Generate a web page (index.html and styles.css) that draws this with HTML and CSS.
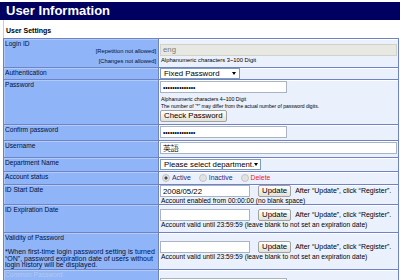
FILE: index.html
```html
<!DOCTYPE html>
<html lang="en">
<head>
  <meta charset="UTF-8" />
  <meta name="viewport" content="width=device-width, initial-scale=1.0" />
  <title>User Information</title>
  <link rel="stylesheet" href="styles.css">
</head>
<body>
  <div class="header">User Information</div>

  <div class="content">
    <div class="section-title">User Settings</div>

    <table class="settings">
      <tr class="row-login">
        <td class="label">
          <div>Login ID</div>
          <div class="rules">[Repetition not allowed]<br>[Changes not allowed]</div>
        </td>
        <td class="field">
          <input class="text-input wide readonly" type="text" value="eng" readonly />
          <div class="hint">Alphanumeric characters 3~100 Digit</div>
        </td>
      </tr>
      <tr>
        <td class="label">Authentication</td>
        <td class="field">
          <div class="select auth">Fixed Password</div>
        </td>
      </tr>
      <tr class="row-pass">
        <td class="label">Password</td>
        <td class="field">
          <input class="text-input mid pass" type="password" value="aaaaaaaaaaaaaa" />
          <div class="hint small">Alphanumeric characters 4~100 Digit</div>
          <div class="hint tiny">The number of “*” may differ from the actual number of password digits.</div>
          <button class="btn">Check Password</button>
        </td>
      </tr>
      <tr class="row-input">
        <td class="label">Confirm password</td>
        <td class="field">
          <input class="text-input mid pass" type="password" value="aaaaaaaaaaaaaa" />
        </td>
      </tr>
      <tr class="row-input row-user">
        <td class="label">Username</td>
        <td class="field">
          <input class="text-input wide" type="text" value="英語" />
        </td>
      </tr>
      <tr class="row-select">
        <td class="label">Department Name</td>
        <td class="field">
          <div class="select dept">Please select department.</div>
        </td>
      </tr>
      <tr>
        <td class="label">Account status</td>
        <td class="field">
          <div class="radios">
            <span class="radio checked"></span><span>Active</span>
            <span class="radio"></span><span>Inactive</span>
            <span class="radio"></span><span class="danger">Delete</span>
          </div>
        </td>
      </tr>
      <tr>
        <td class="label">ID Start Date</td>
        <td class="field">
          <div class="date-line">
            <input class="text-input date" type="text" value="2008/05/22" />
            <button class="btn">Update</button>
            <span class="after">After “Update”, click “Register”.</span>
          </div>
          <div class="hint date-hint">Account enabled from 00:00:00 (no blank space)</div>
        </td>
      </tr>
      <tr class="tall">
        <td class="label">ID Expiration Date</td>
        <td class="field">
          <div class="date-line">
            <input class="text-input date" type="text" value="" />
            <button class="btn">Update</button>
            <span class="after">After “Update”, click “Register”.</span>
          </div>
          <div class="hint date-hint">Account valid until 23:59:59 (leave blank to not set an expiration date)</div>
        </td>
      </tr>
      <tr>
        <td class="label">
          <div>Validity of Password</div>
          <div class="note">*When first-time login password setting is turned<br>“ON”, password expiration date of users without<br>login history will be displayed.</div>
        </td>
        <td class="field">
          <div class="date-line">
            <input class="text-input date" type="text" value="" />
            <button class="btn">Update</button>
            <span class="after">After “Update”, click “Register”.</span>
          </div>
          <div class="hint date-hint">Account valid until 23:59:59 (leave blank to not set an expiration date)</div>
        </td>
      </tr>
      <tr class="disabled">
        <td class="label">Common Password</td>
        <td class="field">
          <input class="text-input mid" type="text" value="" />
        </td>
      </tr>
    </table>
  </div>
</body>
</html>
```

FILE: styles.css
```css
body {
  margin: 0;
  font-family: "Liberation Sans", Arial, sans-serif;
  font-size: 6.6px;
  line-height: 8px;
  color: #000;
  background: #fff;
}
.header {
  margin-top: 2px;
  height: 18px;
  padding-left: 6px;
  background: #000060;
  color: #fff;
  font: bold 13px/18px "Liberation Sans", Arial, sans-serif;
}
.content {
  margin-left: 3px;
  border-left: 1px solid #c9cbd6;
  padding-top: 6px;
}
.section-title {
  font-weight: bold;
  font-size: 7px;
  line-height: 10px;
  padding-left: 2px;
  margin-bottom: 2px;
}
.settings {
  width: 396px;
  margin-left: -1px;
  border-collapse: collapse;
  border: 1px solid #8a98c8;
}
.settings td {
  border: 1px solid #6f82c4;
  padding: 0;
}
.settings td.label {
  width: 151px;
  padding: 1px 2px 0 1px;
  vertical-align: top;
  background: #8fb4f7;
  box-shadow: inset 1px 1px 0 #b3cbf9;
  color: #00123c;
}
.settings td.field {
  padding: 0 0 0 1px;
  vertical-align: middle;
  background: #eaf1fd;
  box-shadow: inset 1px 1px 0 #ffffff;
}
.tall td {
  height: 26px;
}
.rules {
  text-align: right;
  font-size: 5.8px;
  line-height: 10px;
  margin-top: -2px;
  padding-bottom: 1px;
}
.note {
  margin-top: 7px;
  font-size: 7px;
  line-height: 6.5px;
  white-space: nowrap;
}
.disabled td.label {
  color: #b9c8ea;
}
.disabled td.field {
  padding-top: 8px;
}
.text-input {
  display: block;
  box-sizing: border-box;
  height: 12px;
  margin: 0;
  padding: 0 2px;
  border: 1px solid #a9b3c2;
  background: #fff;
  font-family: inherit;
  font-size: 7.8px;
  line-height: normal;
}
.row-login .text-input,
.row-pass .text-input {
  margin-top: 1px;
}
.row-input .text-input {
  margin: 1px 0 2px;
}
.row-user .text-input {
  margin-bottom: 3px;
}
.wide { width: 237px; }
.mid { width: 127px; }
.date { width: 90px; }
.pass { font-size: 6.6px; }
.readonly {
  background: #e8e8e2;
  border-color: #d2d2ca;
  color: #7a7a7a;
}
.select {
  display: flex;
  align-items: center;
  justify-content: space-between;
  box-sizing: border-box;
  height: 11px;
  padding: 0 3px;
  border: 1px solid #7f9db9;
  background: #fff;
  font-size: 7.8px;
  white-space: nowrap;
}
.select::after {
  content: "";
  border-left: 2px solid transparent;
  border-right: 2px solid transparent;
  border-top: 3px solid #000;
}
.row-select .select {
  margin: 1px 0;
}
.auth { width: 80px; }
.dept { width: 101px; }
.btn {
  box-sizing: border-box;
  height: 12px;
  margin: 0;
  padding: 0 3px;
  border: 1px solid #a2a2a2;
  border-radius: 2px;
  background: linear-gradient(#fdfdfb, #e3e1d9);
  color: #000;
  font-family: inherit;
  font-size: 7.8px;
  line-height: 10px;
}
.row-pass .btn {
  display: block;
  margin: 1px 0 2px;
}
.hint {
  font-size: 5.8px;
  line-height: 8px;
  padding-left: 1px;
  white-space: nowrap;
}
.hint.small {
  font-size: 5.2px;
  margin-top: 2px;
}
.hint.tiny {
  font-size: 5px;
  line-height: 6px;
}
.date-hint {
  font-size: 6.7px;
  line-height: 7px;
}
.radios {
  display: flex;
  align-items: center;
  height: 12px;
  padding-left: 2px;
  font-size: 6.9px;
  color: #1a2a80;
}
.radio {
  width: 6px;
  height: 6px;
  margin-right: 2px;
  border: 1px solid #c4c4c4;
  border-radius: 50%;
  background: #e2e2e2;
}
.radio.checked {
  background: radial-gradient(circle, #4a4a4a 1.3px, #e2e2e2 1.8px);
}
.radios span + .radio {
  margin-left: 8px;
}
.danger {
  color: #ee2222;
}
.date-line {
  display: flex;
  align-items: center;
  white-space: nowrap;
}
.date-line .btn {
  margin-left: 8px;
}
.after {
  margin-left: 4px;
  font-size: 7px;
}
```
